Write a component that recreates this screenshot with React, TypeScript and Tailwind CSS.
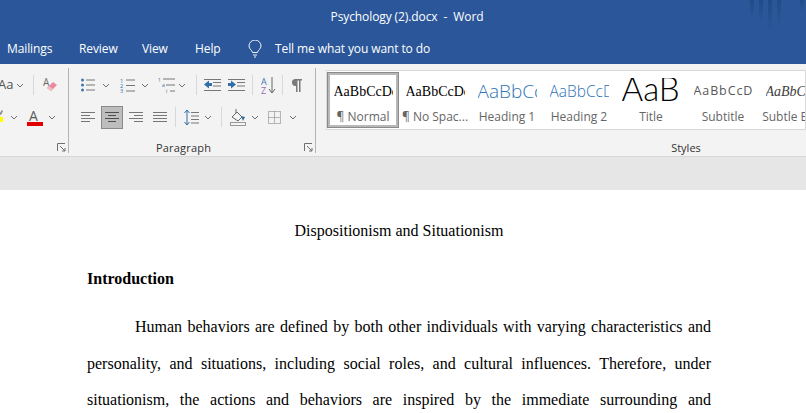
const Chev = ({ cls = "" }: { cls?: string }) => (
  <svg width="8" height="5" viewBox="0 0 8 5" className={cls} fill="none" stroke="#6e6e6e" strokeWidth="1"><path d="M1 1l3 3 3-3" /></svg>
);
const Sep = ({ cls = "" }: { cls?: string }) => <div className={`w-px h-[20px] bg-[#d8d8d8] ${cls}`} />;
const Lines = ({ ys, x1 = 0, x2 = 14 }: { ys: number[]; x1?: number; x2?: number }) => (
  <>{ys.map((y) => <path key={y} d={`M${x1} ${y}H${x2}`} />)}</>
);
const Align = ({ kind }: { kind: string }) => {
  const rows = kind === "left" ? [[0, 14], [0, 9], [0, 14], [0, 9]] : kind === "center" ? [[0, 14], [3, 11], [0, 14], [3, 11]] : kind === "right" ? [[0, 14], [5, 14], [0, 14], [5, 14]] : [[0, 14], [0, 14], [0, 14], [0, 14]];
  return (
    <svg width="14" height="12" viewBox="0 0 14 12" fill="none" stroke={kind === "center" ? "#4d4d4d" : "#777"} strokeWidth="1">
      {rows.map((r, i) => <path key={i} d={`M${r[0]} ${1.5 + i * 3}H${r[1]}`} />)}
    </svg>
  );
};
const Style = ({ sample, label, cls, sel, box = "h-[33px] items-center" }: { sample: string; label: string; cls: string; sel?: boolean; box?: string }) => (
  <div className={`w-[72px] h-[56px] shrink-0 flex flex-col items-center overflow-hidden ${sel ? "border-[3px] border-[#b8b8b8] outline outline-1 outline-[#8a8a8a] -outline-offset-1" : "border-[3px] border-transparent"}`}>
    <div className={`w-[59px] shrink-0 flex overflow-hidden whitespace-nowrap ${box}`}>
      <span className={cls}>{sample}</span>
    </div>
    <div className="text-[12px] leading-[16px] mt-[1px] shrink-0 text-[#666] whitespace-nowrap">{label}</div>
  </div>
);

export default function App() {
  return (
    <div className="w-[806px] h-[413px] overflow-hidden bg-white relative" style={{ fontFamily: '"Open Sans","Noto Sans",sans-serif' }}>
      <header className="h-[64px] bg-[#2b579a] text-white text-[12px]">
        <div className="h-[33px] flex items-center justify-center pl-[8px] tracking-[-0.1px]">
          <span className="whitespace-pre">Psychology (2).docx  -  Word</span>
        </div>
        <div className="h-[31px] flex items-center pl-[7px] tracking-[-0.1px]">
          <span className="w-[72px]">Mailings</span>
          <span className="w-[63px]">Review</span>
          <span className="w-[53px]">View</span>
          <span className="w-[53px]">Help</span>
          <svg width="14" height="18" viewBox="0 0 14 18" fill="none" stroke="#f0f4fa" strokeWidth="1" className="mr-[13px]">
            <path d="M4.5 12.5C4 10 1 9 1 6a6 6 0 0 1 12 0c0 3-3 4-3.500 6.500z" /><path d="M5 15h4M6 17h2" />
          </svg>
          <span className="whitespace-nowrap">Tell me what you want to do</span>
        </div>
      </header>

      <svg width="58" height="32" viewBox="0 0 58 32" className="absolute left-[748px] top-0">
        <defs>
          <linearGradient id="stripe" x1="0" y1="0" x2="0" y2="1"><stop offset="0" stopColor="#1f4a85" stopOpacity="0.9" /><stop offset="1" stopColor="#1f4a85" stopOpacity="0.1" /></linearGradient>
        </defs>
        <g fill="url(#stripe)">
          <rect x="2" width="4" height="16" /><rect x="11" width="4" height="21" /><rect x="20" width="4" height="31" /><rect x="29" width="4" height="23" /><rect x="52" width="4" height="10" />
        </g>
      </svg>

      <section className="h-[93px] bg-[#f3f3f3] border-b border-[#d6d6d6] flex text-[#444]">
        {/* Font group (clipped at the left) */}
        <div className="w-[69px] shrink-0 border-r border-[#b4b4b4] mt-[4px] mb-[3px] relative flex flex-col">
          <div className="h-[26px] shrink-0 mt-[4px] flex items-center">
            <span className="text-[13px] text-[#555] w-[17px] -ml-[2px]">Aa</span>
            <Chev cls="ml-[1px]" />
            <Sep cls="ml-[9px]" />
            <svg width="16" height="16" viewBox="0 0 16 16" className="ml-[9px]">
              <text x="0" y="9" fontSize="10" fill="#6b6b6b">A</text>
              <path d="M4 11l6-6 4 3-6 6z" fill="#e88a9b" /><path d="M4 11l2-2 4 3-2 2z" fill="#f4b9c4" />
            </svg>
          </div>
          <div className="h-[26px] shrink-0 mt-[6px] flex items-center">
            <svg width="5" height="18" viewBox="0 0 5 18" className="-ml-[1px]">
              <path d="M0 6l3-4 1 1-2 4z" fill="#8a8a8a" /><rect x="-1" y="9" width="5" height="5" fill="#ffff00" />
            </svg>
            <Chev cls="ml-[6px]" />
            <svg width="16" height="18" viewBox="0 0 16 18" className="ml-[9px]">
              <text x="2" y="13" fontSize="14" fill="#5a5a5a">A</text>
              <rect x="0" y="14" width="16" height="4" fill="#e00000" />
            </svg>
            <Chev cls="ml-[5px]" />
          </div>
          <svg width="9" height="9" viewBox="0 0 9 9" fill="none" stroke="#6f6f6f" className="absolute left-[57px] bottom-[1px]">
            <path d="M.5 8V.5H8M3 3l5 5M8 5v3H5" />
          </svg>
        </div>

        {/* Paragraph group */}
        <div className="w-[247px] shrink-0 border-r border-[#b4b4b4] mt-[4px] mb-[3px] relative flex flex-col pl-[12px]">
          <div className="h-[26px] shrink-0 mt-[4px] flex items-center">
            <svg width="14" height="14" viewBox="0 0 14 14" fill="none" stroke="#777">
              <Lines ys={[2, 7, 12]} x1={5} x2={14} />
              <g fill="#3f74ad" stroke="none"><circle cx="1.500" cy="2" r="1.500" /><circle cx="1.500" cy="7" r="1.500" /><circle cx="1.500" cy="12" r="1.500" /></g>
            </svg>
            <Chev cls="ml-[7px]" />
            <svg width="15" height="15" viewBox="0 0 15 15" fill="none" stroke="#777" className="ml-[10px]">
              <Lines ys={[2, 7.500, 13]} x1={6} x2={15} />
              <g fill="#2f6ea8" stroke="none" fontSize="5.500"><text x="0" y="4.500">1</text><text x="0" y="10">2</text><text x="0" y="15">3</text></g>
            </svg>
            <Chev cls="ml-[6px]" />
            <svg width="17" height="17" viewBox="0 0 17 17" fill="none" stroke="#777" className="ml-[9px]">
              <path d="M5 2h12M8 8h9M12 14h5" />
              <g fill="#2f6ea8" stroke="none" fontSize="5"><text x="0" y="5">1</text><text x="4" y="10">a</text><text x="8" y="16">i</text></g>
            </svg>
            <Chev cls="ml-[3px]" />
            <Sep cls="ml-[10px]" />
            <svg width="17" height="14" viewBox="0 0 17 14" fill="none" stroke="#777" className="ml-[7px]">
              <path d="M0 1.500h17M9 4.500h8M9 8h8M0 12.500h17" />
              <path d="M0 6.500l5-4v2.500h3v3H5v2.500z" fill="#2f6ea8" stroke="none" />
            </svg>
            <svg width="17" height="14" viewBox="0 0 17 14" fill="none" stroke="#777" className="ml-[7px]">
              <path d="M0 1.500h17M9 4.500h8M9 8h8M0 12.500h17" />
              <path d="M8 6.500l-5-4v2.500H0v3h3v2.500z" fill="#2f6ea8" stroke="none" />
            </svg>
            <Sep cls="ml-[7px]" />
            <svg width="15" height="17" viewBox="0 0 15 17" className="ml-[8px]">
              <text x="0" y="8" fontSize="9" fill="#3f74ad">A</text>
              <text x="0" y="16.500" fontSize="9" fill="#9a6bb5">Z</text>
              <path d="M11 0v15M8 12l3 4 3-4" fill="none" stroke="#666" strokeWidth="1" />
            </svg>
            <Sep cls="ml-[6px]" />
            <svg width="11" height="13" viewBox="0 0 11 13" className="ml-[8px]">
              <path d="M4 0h7v1.500H9.500V13H8V1.500H6.500V13H5V7A3.500 3.500 0 0 1 4 0z" fill="#7a7a7a" />
            </svg>
          </div>
          <div className="h-[26px] shrink-0 mt-[6px] flex items-center">
            <Align kind="left" />
            <div className="w-[22px] h-[23px] ml-[6px] bg-[#bdbdbd] border border-[#8a8a8a] flex items-center justify-center"><Align kind="center" /></div>
            <div className="ml-[6px] flex"><Align kind="right" /></div>
            <div className="ml-[10px] flex"><Align kind="justify" /></div>
            <Sep cls="ml-[8px]" />
            <svg width="15" height="17" viewBox="0 0 15 17" fill="none" className="ml-[8px]">
              <path d="M3 1v15M.500 4L3 1l2.500 3M.500 13L3 16l2.500-3" stroke="#2f6ea8" />
              <path d="M7 3.500h8M7 7h8M7 10.500h8M7 14h8" stroke="#777" />
            </svg>
            <Chev cls="ml-[5px]" />
            <Sep cls="ml-[9px]" />
            <svg width="16" height="17" viewBox="0 0 16 17" fill="none" className="ml-[8px]">
              <path d="M2 8l5-5 5 5-4 4z" stroke="#666" />
              <path d="M6 0v4" stroke="#666" />
              <path d="M11 7l4 1-2 4z" fill="#2f6ea8" />
              <rect x=".500" y="13.500" width="15" height="3" stroke="#999" />
            </svg>
            <Chev cls="ml-[5px]" />
            <svg width="13" height="13" viewBox="0 0 13 13" fill="none" stroke="#777" strokeDasharray="1 1" className="ml-[9px]">
              <rect x=".500" y=".500" width="12" height="12" /><path d="M.500 6.500h12M6.500 .500v12" />
            </svg>
            <Chev cls="ml-[8px]" />
          </div>
          <div className="text-[11px] leading-[14px] shrink-0 mt-[11px] text-center text-[#333] pr-[29px] tracking-[0.2px]">Paragraph</div>
          <svg width="9" height="9" viewBox="0 0 9 9" fill="none" stroke="#6f6f6f" className="absolute left-[235px] bottom-[1px]">
            <path d="M.5 8V.5H8M3 3l5 5M8 5v3H5" />
          </svg>
        </div>

        {/* Styles group */}
        <div className="flex-1 min-w-0 mt-[4px] flex flex-col">
          <div className="ml-[10px] mt-[2px] h-[60px] shrink-0 bg-white border border-[#d9d9d9] flex items-center overflow-hidden">
            <Style sel sample="AaBbCcDd" label="¶ Normal" cls="text-[14px] text-black font-['Liberation_Serif']" />
            <Style sample="AaBbCcDd" label="¶ No Spac..." cls="text-[14px] text-black font-['Liberation_Serif']" />
            <Style sample="AaBbCcD" label="Heading 1" cls="text-[19px] text-[#2e74b5] font-['Open_Sans'] font-light" />
            <Style sample="AaBbCcDd" label="Heading 2" cls="text-[15.500px] text-[#2e74b5] font-['Open_Sans'] font-light" />
            <Style sample="AaB" label="Title" box="h-[30px] mt-[3px] items-start" cls="text-[33px] leading-[28px] -mt-[4px] text-black font-['Lato'] font-light" />
            <Style sample="AaBbCcDd" label="Subtitle" cls="text-[12.500px] text-[#595959] tracking-[0.9px] font-['Open_Sans']" />
            <Style sample="AaBbCcDd" label="Subtle Em..." cls="text-[14px] italic text-[#404040] font-['Liberation_Serif']" />
          </div>
          <div className="text-[11px] leading-[14px] mt-[11px] shrink-0 text-center text-[#333] pl-[250px]">Styles</div>
        </div>
      </section>

      <div className="h-[33px] bg-[#e6e6e6]" />

      <main className="px-[87px] w-[798px] text-[16px] text-black" style={{ fontFamily: '"Liberation Serif",serif' }}>
        <p className="text-center leading-[20px] mt-[31px]">Dispositionism and Situationism</p>
        <p className="font-bold leading-[20px] mt-[28px]">Introduction</p>
        <p className="text-justify indent-[48px] leading-[36.500px] mt-[20px]">
          Human behaviors are defined by both other individuals with varying characteristics and personality, and situations, including social roles, and cultural influences. Therefore, under situationism, the actions and behaviors are inspired by the immediate surrounding and environment in which the individual finds themselves at any given moment in time.
        </p>
      </main>
    </div>
  );
}
